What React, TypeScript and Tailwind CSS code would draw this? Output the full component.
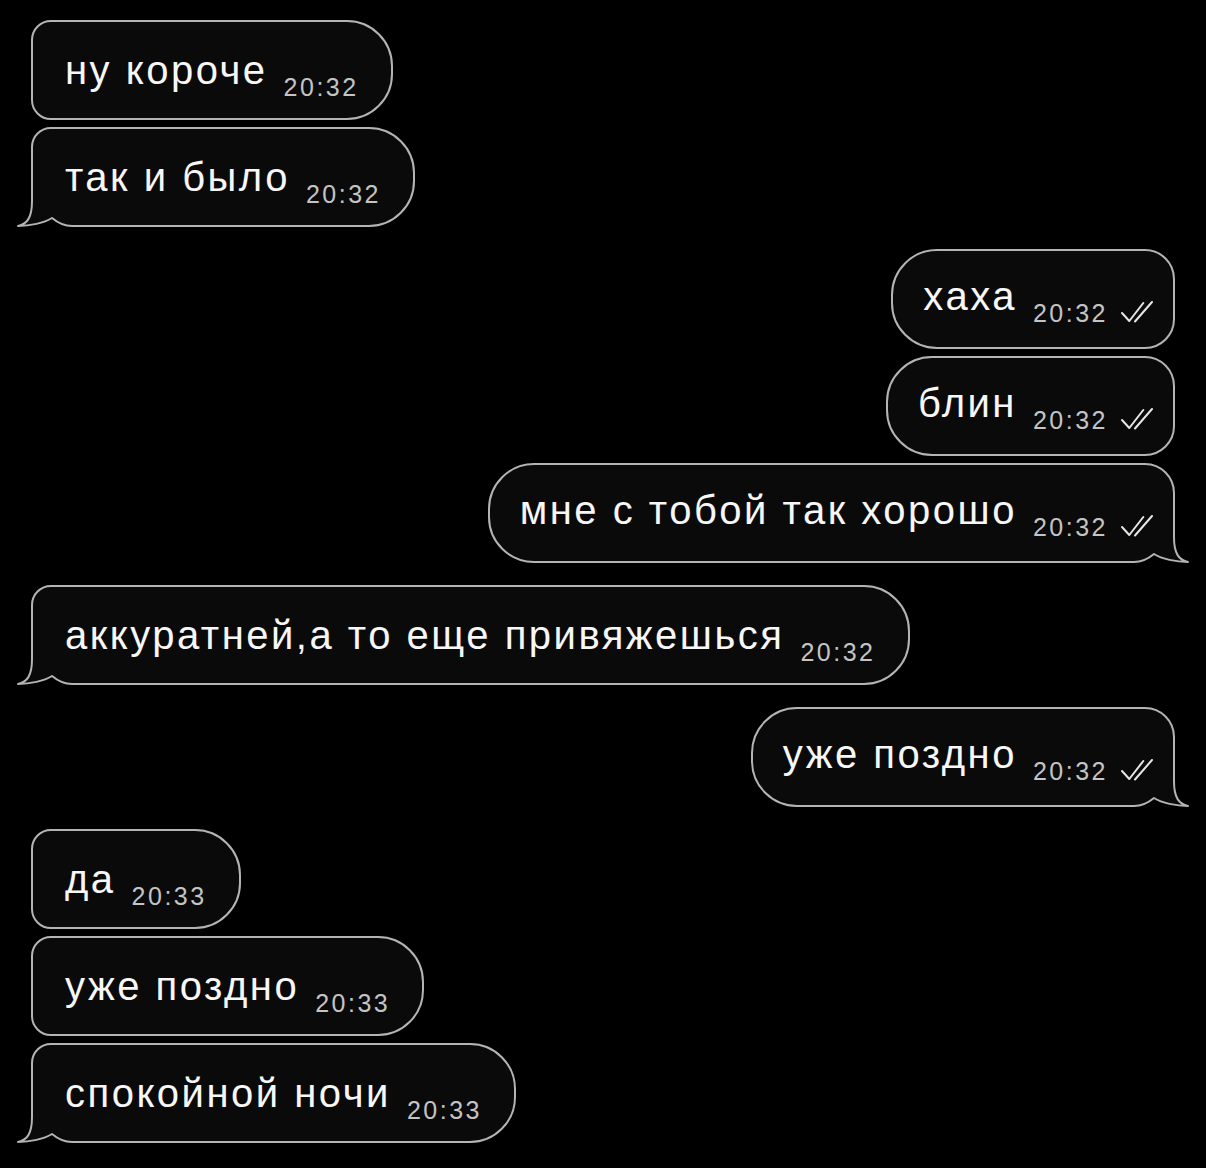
import React from "react";

type Msg = { text: string; time: string; out?: boolean; tail?: boolean };

const groups: Msg[][] = [
  [
    { text: "ну короче", time: "20:32" },
    { text: "так и было", time: "20:32", tail: true },
  ],
  [
    { text: "хаха", time: "20:32", out: true },
    { text: "блин", time: "20:32", out: true },
    { text: "мне с тобой так хорошо", time: "20:32", out: true, tail: true },
  ],
  [{ text: "аккуратней,а то еще привяжешься", time: "20:32", tail: true }],
  [{ text: "уже поздно", time: "20:32", out: true, tail: true }],
  [
    { text: "да", time: "20:33" },
    { text: "уже поздно", time: "20:33" },
    { text: "спокойной ночи", time: "20:33", tail: true },
  ],
];

function Tail({ out }: { out?: boolean }) {
  const d = "M16 0 L16 6 C16 23 11 29 2 31 C14 31 28 28 36 23 C42 28 48 31 56 31 L60 31";
  return (
    <svg
      width="60"
      height="34"
      viewBox="0 0 60 34"
      className={
        out
          ? "absolute -right-[17px] -bottom-[4px] -scale-x-100"
          : "absolute -left-[17px] -bottom-[4px]"
      }
    >
      <rect x="0" y="0" width="60" height="34" fill="#000" />
      <path d={d + " L60 0 Z"} fill="#0a0a0a" />
      <path d={d} fill="none" stroke="#b4b4b4" strokeWidth="2" strokeLinejoin="round" />
    </svg>
  );
}

function Checks() {
  return (
    <svg width="32" height="22" viewBox="0 0 32 22" className="ml-[13px] inline-block align-[-13px]">
      <path d="M1 12 L8.3 20 L22.3 2" fill="none" stroke="#e6e6e6" strokeWidth="2" strokeLinecap="round" strokeLinejoin="round" />
      <path d="M14 20.5 L31 1" fill="none" stroke="#e6e6e6" strokeWidth="2" strokeLinecap="round" />
    </svg>
  );
}

function Bubble({ m }: { m: Msg }) {
  const shape = m.out
    ? m.tail
      ? "rounded-l-[46px] rounded-tr-[30px] rounded-br-none pl-[30px] pr-[20px]"
      : "rounded-l-[46px] rounded-r-[30px] pl-[30px] pr-[20px]"
    : m.tail
      ? "rounded-tl-[20px] rounded-bl-none rounded-r-[46px] pl-[32px] pr-[32px]"
      : "rounded-l-[20px] rounded-r-[46px] pl-[32px] pr-[32px]";
  return (
    <div className={`relative flex h-[100px] items-center border-2 border-[#b4b4b4] bg-[#0a0a0a] ${shape}`}>
      {m.tail && <Tail out={m.out} />}
      <div className="relative whitespace-nowrap text-[40px] leading-none">
        <span className="tracking-[2.5px] text-[#f7f7f7]">{m.text}</span>
        <span className="ml-[16px] align-[-12px] text-[25px] leading-[0] tracking-[2.5px] text-[#c4c4c4]">
          {m.time}
        </span>
        {m.out && <Checks />}
      </div>
    </div>
  );
}

export default function App() {
  return (
    <div className="flex min-h-[1168px] w-[1206px] flex-col gap-[22px] bg-black px-[31px] pt-[20px] font-['Liberation_Sans',Arial,sans-serif]">
      {groups.map((g, i) => (
        <div key={i} className={`flex flex-col gap-[7px] ${g[0].out ? "items-end" : "items-start"}`}>
          {g.map((m, j) => (
            <Bubble key={j} m={m} />
          ))}
        </div>
      ))}
    </div>
  );
}
